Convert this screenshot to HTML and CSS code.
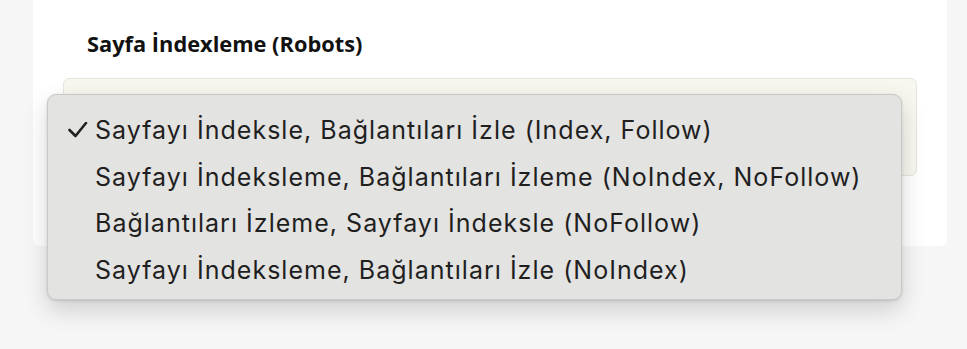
FILE: index.html
```html
<!DOCTYPE html>
<html lang="tr">
<head>
  <meta charset="UTF-8">
  <meta name="viewport" content="width=device-width, initial-scale=1.0">
  <title>Sayfa İndexleme</title>
  <link rel="stylesheet" href="styles.css">
</head>
<body>
  <div class="card">
    <label class="field-label" for="robots">Sayfa İndexleme (Robots)</label>
    <div class="select-box" id="robots">
      <svg class="select-arrow" width="20" height="12" viewBox="0 0 20 12">
        <polyline points="1,1 10,10 19,1" fill="none" stroke="#1d1d1d" stroke-width="2"/>
      </svg>
    </div>
  </div>

  <!-- açılır menü (native select popup) -->
  <ul class="menu">
    <li class="menu-item selected">
      <svg class="check" width="20" height="16" viewBox="0 0 20 16">
        <polyline points="1.5,8 7.5,14 18,1" fill="none" stroke="#222" stroke-width="2.6" stroke-linecap="round" stroke-linejoin="round"/>
      </svg>
      Sayfayı İndeksle, Bağlantıları İzle (Index, Follow)
    </li>
    <li class="menu-item">Sayfayı İndeksleme, Bağlantıları İzleme (NoIndex, NoFollow)</li>
    <li class="menu-item">Bağlantıları İzleme, Sayfayı İndeksle (NoFollow)</li>
    <li class="menu-item">Sayfayı İndeksleme, Bağlantıları İzle (NoIndex)</li>
  </ul>
</body>
</html>
```

FILE: styles.css
```css
body {
  margin: 0;
  height: 349px;
  overflow: hidden;
  position: relative;
  background-color: #f6f6f6;
  font-family: "Open Sans", Arial, sans-serif;
}
.card {
  margin: 0 20px 0 33px;
  padding: 30px 30px 70px 30px;
  background-color: #ffffff;
  border-radius: 0 0 7px 7px;
}
.field-label {
  display: block;
  padding-left: 24px;
  font-size: 21.8px;
  font-weight: 700;
  line-height: 28px;
  color: #111;
}
.select-box {
  position: relative;
  margin-top: 20px;
  height: 96px;
  border: 1px solid #e6e6de;
  border-radius: 6px;
  background-color: #f7f7f0;
}
.select-arrow {
  position: absolute;
  right: 14px;
  top: 44px;
}
.menu {
  position: absolute;
  left: 47px;
  top: 94px;
  width: 853px;
  margin: 0;
  padding: 12px 0 6px 0;
  list-style: none;
  background-color: #e3e3e1;
  border: 1px solid #c9c9c7;
  border-radius: 9px;
  box-shadow: 0 10px 24px rgba(0, 0, 0, 0.16), 0 1px 3px rgba(0, 0, 0, 0.12);
  font-family: Inter, "Noto Sans", sans-serif;
  font-size: 25px;
  letter-spacing: 1.02px;
  color: #1f1f1f;
}
.menu-item {
  position: relative;
  height: 46.6px;
  line-height: 46.6px;
  padding-left: 47px;
  white-space: nowrap;
}
.check {
  position: absolute;
  left: 20px;
  top: 15px;
}
```
